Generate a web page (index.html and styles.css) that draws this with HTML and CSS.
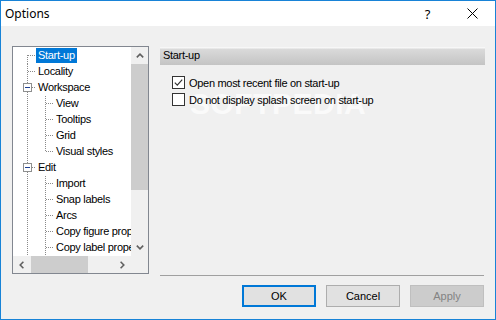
FILE: index.html
```html
<!DOCTYPE html>
<html lang="en">
<head>
  <meta charset="UTF-8">
  <title>Options</title>
  <link rel="stylesheet" href="styles.css">
</head>
<body>
  <div class="window">
    <div class="titlebar">
      <span class="title">Options</span>
      <span class="tbtn help">?</span>
      <span class="tbtn close">
        <svg width="11" height="11" viewBox="0 0 11 11"><path d="M0.5 0.5 L10.5 10.5 M10.5 0.5 L0.5 10.5" stroke="#000" stroke-width="1" fill="none"/></svg>
      </span>
    </div>

    <div class="content">
      <div class="tree">
        <div class="tree-list">
          <div class="row"><span class="c first"></span><span class="label selected">Start-up</span></div>
          <div class="row"><span class="c tee"></span><span class="label">Locality</span></div>
          <div class="row"><span class="c tee"><span class="box"></span></span><span class="label">Workspace</span></div>
          <div class="row"><span class="c pipe"></span><span class="c tee"></span><span class="label">View</span></div>
          <div class="row"><span class="c pipe"></span><span class="c tee"></span><span class="label">Tooltips</span></div>
          <div class="row"><span class="c pipe"></span><span class="c tee"></span><span class="label">Grid</span></div>
          <div class="row"><span class="c pipe"></span><span class="c last"></span><span class="label">Visual styles</span></div>
          <div class="row"><span class="c tee"><span class="box"></span></span><span class="label">Edit</span></div>
          <div class="row"><span class="c pipe"></span><span class="c tee"></span><span class="label">Import</span></div>
          <div class="row"><span class="c pipe"></span><span class="c tee"></span><span class="label">Snap labels</span></div>
          <div class="row"><span class="c pipe"></span><span class="c tee"></span><span class="label">Arcs</span></div>
          <div class="row"><span class="c pipe"></span><span class="c tee"></span><span class="label">Copy figure properties</span></div>
          <div class="row"><span class="c pipe"></span><span class="c tee"></span><span class="label">Copy label properties</span></div>
        </div>

        <div class="vscroll">
          <span class="sb-btn">
            <svg width="8" height="5" viewBox="0 0 8 5"><path d="M0.8 4.4 L4 1.2 L7.2 4.4" stroke="#606060" stroke-width="1.6" fill="none"/></svg>
          </span>
          <span class="vthumb"></span>
          <span class="sb-fill"></span>
          <span class="sb-btn">
            <svg width="8" height="5" viewBox="0 0 8 5"><path d="M0.8 0.6 L4 3.8 L7.2 0.6" stroke="#606060" stroke-width="1.6" fill="none"/></svg>
          </span>
        </div>

        <div class="hscroll">
          <span class="sb-btn">
            <svg width="5" height="8" viewBox="0 0 5 8"><path d="M4.4 0.8 L1.2 4 L4.4 7.2" stroke="#606060" stroke-width="1.6" fill="none"/></svg>
          </span>
          <span class="hthumb"></span>
          <span class="sb-fill"></span>
          <span class="sb-btn">
            <svg width="5" height="8" viewBox="0 0 5 8"><path d="M0.6 0.8 L3.8 4 L0.6 7.2" stroke="#606060" stroke-width="1.6" fill="none"/></svg>
          </span>
        </div>
        <div class="corner"></div>
      </div>

      <div class="panel">
        <div class="panel-head">Start-up</div>
        <div class="watermark">SOFTPEDIA<sup>®</sup></div>
        <div class="options">
          <label class="opt">
            <span class="check">
              <svg width="11" height="11" viewBox="0 0 11 11"><path d="M1.8 5.6 L4.3 8.1 L9.2 2.6" stroke="#333" stroke-width="1.2" fill="none"/></svg>
            </span>
            Open most recent file on start-up
          </label>
          <label class="opt">
            <span class="check"></span>
            Do not display splash screen on start-up
          </label>
        </div>
        <div class="sep"></div>
        <div class="buttons">
          <button class="btn default">OK</button>
          <button class="btn">Cancel</button>
          <button class="btn disabled">Apply</button>
        </div>
      </div>
    </div>
  </div>
</body>
</html>
```

FILE: styles.css
```css
body {
  margin: 0;
  font-family: 'Liberation Sans', Arial, sans-serif;
  font-size: 11px;
  letter-spacing: -0.3px;
  color: #000;
  background: #fff;
}
.window {
  width: 496px;
  height: 320px;
  box-sizing: border-box;
  border: 1px solid #1883d7;
  display: flex;
  flex-direction: column;
  background: #f0f0f0;
}
.titlebar {
  height: 25px;
  flex: none;
  background: #fff;
  display: flex;
  align-items: center;
  font-family: 'Noto Sans', 'Open Sans', sans-serif;
  font-size: 12px;
  letter-spacing: 0;
}
.title {
  padding-left: 4px;
}
.tbtn {
  width: 45px;
  height: 25px;
  display: flex;
  align-items: center;
  justify-content: center;
}
.help {
  margin-left: auto;
  font-size: 13px;
}
.content {
  flex: 1;
  display: flex;
  gap: 11px;
  padding: 20px 10px 12px 11px;
  align-items: flex-start;
}

/* tree view */
.tree {
  width: 137px;
  height: 228px;
  flex: none;
  box-sizing: border-box;
  border: 1px solid #828790;
  background: #fff;
  display: grid;
  grid-template-columns: 118px 17px;
  grid-template-rows: 209px 17px;
}
.tree-list {
  overflow: hidden;
  padding: 1px 0 0 5px;
  white-space: nowrap;
}
.row {
  height: 16px;
  display: flex;
  align-items: flex-start;
}
.c {
  width: 18px;
  height: 16px;
  flex: none;
  display: block;
  --dv: repeating-linear-gradient(to bottom, #8a8a8a 0 1px, transparent 1px 2px);
  --dh: repeating-linear-gradient(to right, #8a8a8a 0 1px, transparent 1px 2px);
}
.tee {
  background: var(--dv) 9px 0 / 1px 16px no-repeat, var(--dh) 10px 7px / 8px 1px no-repeat;
}
.first {
  background: var(--dv) 9px 7px / 1px 9px no-repeat, var(--dh) 10px 7px / 8px 1px no-repeat;
}
.last {
  background: var(--dv) 9px 0 / 1px 8px no-repeat, var(--dh) 10px 7px / 8px 1px no-repeat;
}
.pipe {
  background: var(--dv) 9px 0 / 1px 16px no-repeat;
}
.box {
  display: block;
  width: 9px;
  height: 9px;
  margin: 3px 0 0 5px;
  box-sizing: border-box;
  border: 1px solid #8e8f8f;
  background: linear-gradient(#1c3f94, #1c3f94) center / 5px 1px no-repeat, #fff;
}
.label {
  height: 15px;
  line-height: 15px;
  padding: 0 2px;
}
.label.selected {
  background: #0078d7;
  color: #fff;
}

/* scrollbars */
.vscroll, .hscroll {
  background: #f0f0f0;
  display: flex;
}
.vscroll {
  flex-direction: column;
}
.sb-btn {
  width: 17px;
  height: 17px;
  flex: none;
  display: flex;
  align-items: center;
  justify-content: center;
}
.sb-fill {
  flex: 1;
}
.vthumb {
  height: 126px;
  background: #cdcdcd;
}
.hthumb {
  width: 57px;
  margin-left: 1px;
  background: #cdcdcd;
}
.corner {
  background: #f0f0f0;
}

/* right panel */
.panel {
  flex: 1;
  align-self: stretch;
  display: flex;
  flex-direction: column;
  position: relative;
}
.panel-head {
  margin-top: 1px;
  height: 18px;
  line-height: 17px;
  padding-left: 3px;
  background: linear-gradient(#f7f7f7 0, #f7f7f7 1px, #dadada 2px, #c4c4c4 100%);
}
.options {
  margin-top: 9px;
  display: flex;
  flex-direction: column;
  position: relative;
  z-index: 1;
}
.opt {
  height: 17px;
  display: flex;
  align-items: center;
  gap: 4px;
  padding-left: 12px;
}
.check {
  width: 13px;
  height: 13px;
  box-sizing: border-box;
  border: 1px solid #333;
  background: #fff;
  display: flex;
  align-items: center;
  justify-content: center;
}
.watermark {
  position: absolute;
  left: 30px;
  top: 41px;
  font-size: 30px;
  font-weight: bold;
  color: #fafafa;
  letter-spacing: 0.5px;
}
.watermark sup {
  font-size: 10px;
  font-weight: normal;
}
.sep {
  margin-top: auto;
  margin-right: 1px;
  height: 1px;
  background: #a0a0a0;
}
.buttons {
  display: flex;
  justify-content: flex-end;
  gap: 10px;
  margin-top: 9px;
  padding-right: 1px;
}
.btn {
  width: 74px;
  height: 22px;
  box-sizing: border-box;
  border: 1px solid #adadad;
  background: #e1e1e1;
  font-family: 'Liberation Sans', Arial, sans-serif;
  font-size: 11px;
  color: #000;
  padding: 0;
}
.btn.default {
  border: 2px solid #0078d7;
}
.btn.disabled {
  background: #cccccc;
  border-color: #bfbfbf;
  color: #838383;
}
```
